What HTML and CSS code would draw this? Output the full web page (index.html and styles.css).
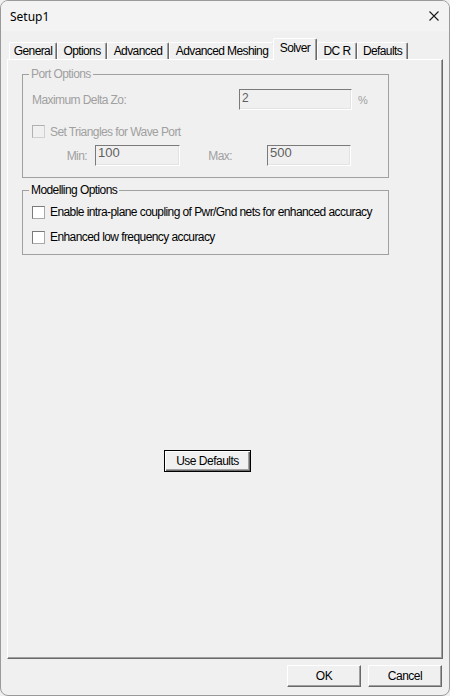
FILE: index.html
```html
<!DOCTYPE html>
<html>
<head>
<meta charset="utf-8">
<title>Setup1</title>
<link rel="stylesheet" href="styles.css">
</head>
<body>
<div class="window">
  <div class="titlebar">
    <span class="title">Setup1</span>
    <svg class="close" width="10" height="10" viewBox="0 0 10 10"><path d="M0.5 0.5 L9.5 9.5 M9.5 0.5 L0.5 9.5" stroke="#1a1a1a" stroke-width="1.1" fill="none"/></svg>
  </div>
  <div class="tabs">
    <div class="tab t-general">General</div>
    <div class="tab t-options">Options</div>
    <div class="tab t-advanced">Advanced</div>
    <div class="tab t-meshing">Advanced Meshing</div>
    <div class="tab t-solver selected">Solver</div>
    <div class="tab t-dcr">DC R</div>
    <div class="tab t-defaults">Defaults</div>
  </div>
  <div class="panel">
    <fieldset class="group port disabled">
      <legend>Port Options</legend>
      <div class="row r1">
        <span class="lbl lbl-delta">Maximum Delta Zo:</span>
        <div class="edit edit-delta">2</div>
        <span class="unit">%</span>
      </div>
      <div class="row r2">
        <span class="chk"></span>
        <span class="chk-text">Set Triangles for Wave Port</span>
      </div>
      <div class="row r3">
        <span class="lbl lbl-min">Min:</span>
        <div class="edit edit-min">100</div>
        <span class="lbl lbl-max">Max:</span>
        <div class="edit edit-max">500</div>
      </div>
    </fieldset>
    <fieldset class="group model">
      <legend>Modelling Options</legend>
      <div class="row m1">
        <span class="chk"></span>
        <span class="chk-text">Enable intra-plane coupling of Pwr/Gnd nets for enhanced accuracy</span>
      </div>
      <div class="row m2">
        <span class="chk"></span>
        <span class="chk-text">Enhanced low frequency accuracy</span>
      </div>
    </fieldset>
    <button class="btn btn-default">Use Defaults</button>
  </div>
  <div class="footer">
    <button class="btn btn-foot">OK</button>
    <button class="btn btn-foot">Cancel</button>
  </div>
</div>
</body>
</html>
```
FILE: styles.css
```css
html, body {
  margin: 0;
  padding: 0;
  background: #f0f0f0;
}
body {
  width: 450px;
  height: 696px;
  overflow: hidden;
  font-family: "Liberation Sans", Arial, sans-serif;
  font-size: 12px;
  letter-spacing: -0.58px;
  color: #000;
}
.window {
  box-sizing: border-box;
  width: 450px;
  height: 696px;
  border: 1px solid #9a9a9a;
  border-radius: 8px;
  background: #f0f0f0;
  overflow: hidden;
  display: flex;
  flex-direction: column;
}
.titlebar {
  height: 30px;
  flex: none;
  display: flex;
  align-items: center;
  background: #f3f3f3;
  padding-left: 9px;
}
.title {
  font-family: "Noto Sans", "Open Sans", sans-serif;
  font-size: 12px;
  letter-spacing: 0;
  color: #000;
}
.close {
  margin-left: auto;
  margin-right: 10px;
  display: block;
}
.tabs {
  height: 28px;
  flex: none;
  display: flex;
  align-items: flex-end;
  padding-left: 8px;
}
.tab {
  box-sizing: border-box;
  height: 17px;
  padding-top: 1px;
  line-height: 14px;
  text-align: center;
  white-space: nowrap;
  background: #f0f0f0;
  border-top: 1px solid #fff;
  border-left: 1px solid #fff;
  border-right: 1px solid #696969;
  box-shadow: inset -1px 0 0 #a0a0a0;
  border-radius: 2px 2px 0 0;
  letter-spacing: -0.6px;
}
.t-general { width: 48px; }
.t-options { width: 50px; }
.t-advanced { width: 62px; }
.t-meshing { width: 106px; }
.t-solver { width: 44px; }
.t-dcr { width: 40px; }
.t-defaults { width: 51px; }
.tab.selected {
  position: relative;
  z-index: 2;
  height: 22px;
  margin-left: -2px;
  margin-bottom: -1px;
  padding-top: 2px;
}
.panel {
  box-sizing: border-box;
  margin-left: 6px;
  width: 436px;
  height: 600px;
  flex: none;
  border-top: 1px solid #fff;
  border-left: 1px solid #fff;
  border-right: 1px solid #696969;
  border-bottom: 1px solid #696969;
  box-shadow: inset -1px -1px 0 #a0a0a0;
  display: flex;
  flex-direction: column;
  align-items: flex-start;
}
.group {
  box-sizing: border-box;
  width: 367px;
  margin: 0 0 0 14px;
  padding: 0;
  border: 1px solid #a0a0a0;
  min-width: 0;
}
.group legend {
  margin-left: 6px;
  padding: 0 2px;
  line-height: 14px;
  height: 14px;
}
.port {
  margin-top: 7px;
  padding-bottom: 11px;
}
.model {
  margin-top: 5px;
  padding-bottom: 10px;
}
.disabled, .disabled legend {
  color: #a0a0a0;
}
.row {
  display: flex;
  align-items: center;
  padding-left: 9px;
}
.r1 { margin-top: 8px; height: 21px; }
.r2 { margin-top: 15px; height: 13px; }
.r3 { margin-top: 7px; height: 21px; }
.m1 { margin-top: 8px; height: 14px; }
.m2 { margin-top: 11px; height: 14px; }
.lbl { white-space: nowrap; }
.lbl-delta { width: 207px; }
.lbl-min { width: 55px; text-align: right; margin-right: 8px; }
.lbl-max { width: 52px; text-align: right; margin-right: 35px; }
.unit { margin-left: 6px; font-size: 11px; }
.edit {
  box-sizing: border-box;
  height: 21px;
  padding: 1px 0 0 2px;
  line-height: 14px;
  color: #5f5f5f;
  background: #f0f0f0;
  border: 1px solid;
  border-color: #7a7a7a #ffffff #ffffff #7a7a7a;
  box-shadow: inset -1px -1px 0 #e3e3e3;
  letter-spacing: 0;
}
.edit-delta { width: 113px; }
.edit-min { width: 85px; padding-top: 0; font-size: 13px; }
.edit-max { width: 84px; padding-top: 0; font-size: 13px; }
.chk {
  box-sizing: border-box;
  width: 13px;
  height: 13px;
  flex: none;
  background: #fff;
  border: 1px solid;
  border-color: #7a7a7a #a8a8a8 #a8a8a8 #7a7a7a;
  margin-right: 5px;
}
.disabled .chk {
  background: #f0f0f0;
  border-color: #b0b0b0 #d0d0d0 #d0d0d0 #b0b0b0;
}
.chk-text {
  white-space: nowrap;
  line-height: 14px;
}
.btn {
  box-sizing: border-box;
  font-family: "Liberation Sans", Arial, sans-serif;
  font-size: 12px;
  letter-spacing: -0.5px;
  color: #000;
  background: #f0f0f0;
  padding: 0;
  line-height: 14px;
  cursor: default;
}
.btn-default {
  margin-top: 195px;
  margin-left: 156px;
  width: 87px;
  height: 22px;
  border: 1px solid #000;
  box-shadow: inset 1px 1px 0 #fff, inset -1px -1px 0 #696969, inset -2px -2px 0 #a0a0a0;
}
.footer {
  display: flex;
  justify-content: flex-end;
  gap: 7px;
  margin-top: 6px;
  padding-right: 7px;
}
.btn-foot {
  width: 74px;
  height: 22px;
  border: 1px solid;
  border-color: #fff #696969 #696969 #fff;
  box-shadow: inset -1px -1px 0 #a0a0a0;
}
```
